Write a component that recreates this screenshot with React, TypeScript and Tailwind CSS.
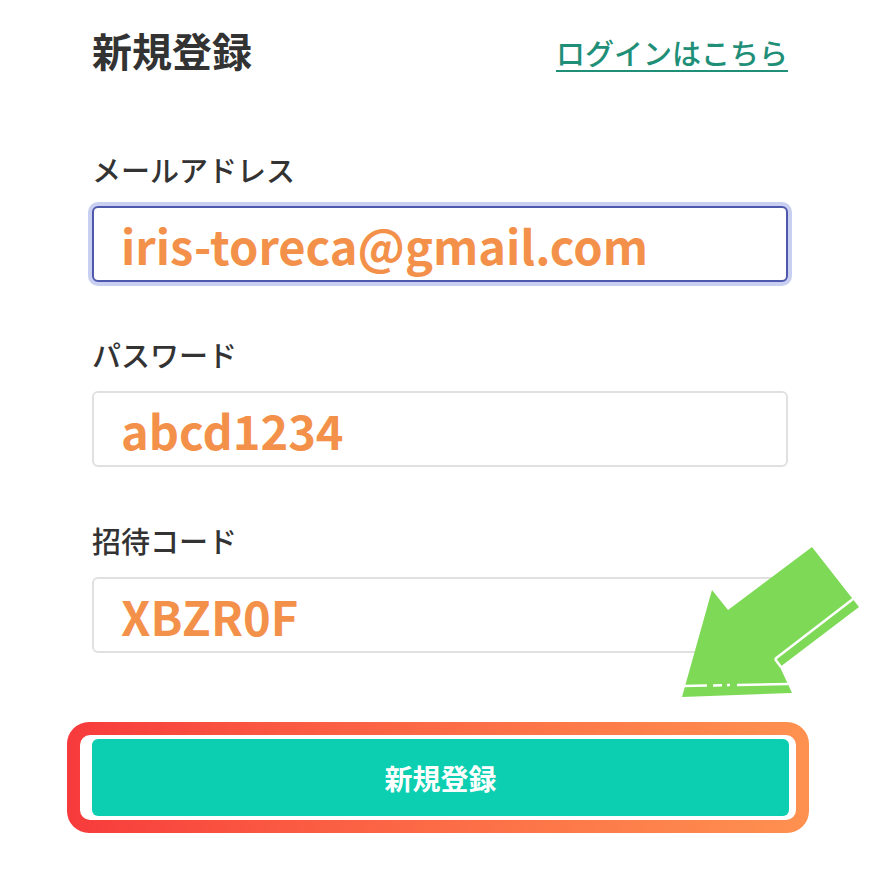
import React from 'react';

const jp = { fontFamily: '"Noto Sans CJK JP", "Noto Sans", sans-serif' };

function Field({ label, value, focused, top }: { label: string; value: string; focused?: boolean; top: string }) {
  return (
    <div className={top}>
      <p className="text-[29px] leading-[28px] font-medium text-[#333333]">{label}</p>
      <div
        className={`mt-[23px] h-[76px] rounded-[6px] bg-white flex items-center pl-[27px] ${
          focused ? 'border-2 border-[#4f58ad] ring-4 ring-[#c9cff1]' : 'border-2 border-[#e0e0e0]'
        }`}
      >
        <span className="text-[47px] leading-none font-bold text-[#f3914b]">{value}</span>
      </div>
    </div>
  );
}

function Arrow() {
  return (
    <svg
      className="absolute left-[660px] top-[530px] pointer-events-none"
      width="220"
      height="180"
      viewBox="660 530 220 180"
    >
      <polygon
        points="812,547 859,607 780,667 792,693 682,697 712,590 728,610"
        fill="#7ed957"
      />
      <line x1="853" y1="599" x2="775" y2="659" stroke="#ffffff" strokeWidth="2.5" />
      <line x1="775" y1="659" x2="781" y2="667" stroke="#ffffff" strokeWidth="2.5" />
      <line x1="683" y1="686" x2="707" y2="685.5" stroke="#ffffff" strokeWidth="2.5" />
      <line x1="713" y1="685.4" x2="722" y2="685.2" stroke="#ffffff" strokeWidth="2.5" />
      <line x1="727" y1="685.1" x2="730" y2="685" stroke="#ffffff" strokeWidth="2.5" />
      <line x1="737" y1="685" x2="788" y2="684" stroke="#ffffff" strokeWidth="2.5" />
    </svg>
  );
}

export default function App() {
  return (
    <div className="relative w-[880px] h-[880px] bg-white overflow-hidden" style={jp}>
      <div className="w-[696px] mx-auto pt-[30px]">
        {/* ヘッダー */}
        <div className="flex items-center justify-between h-[40px]">
          <h1 className="text-[40px] leading-[40px] font-bold text-[#333333]">新規登録</h1>
          <a className="text-[29px] leading-[28px] font-medium text-[#1f8f78] underline underline-offset-[5px] decoration-2 mt-[4px]">
            ログインはこちら
          </a>
        </div>

        <Field label="メールアドレス" value="iris-toreca@gmail.com" focused top="mt-[85px]" />
        <Field label="パスワード" value="abcd1234" top="mt-[58px]" />
        <Field label="招待コード" value="XBZR0F" top="mt-[59px]" />

        {/* 登録ボタン */}
        <div className="mt-[69px] -ml-[25px] -mr-[21px] rounded-[22px] p-[13px] bg-gradient-to-r from-[#f73a3c] to-[#fe9150]">
          <div className="rounded-[10px] bg-white pl-[12px] pr-[7px] py-[4px]">
            <button className="w-full h-[77px] rounded-[6px] bg-[#0ccfb1] text-white text-[28px] font-bold flex items-center justify-center">
              新規登録
            </button>
          </div>
        </div>
      </div>
      <Arrow />
    </div>
  );
}
